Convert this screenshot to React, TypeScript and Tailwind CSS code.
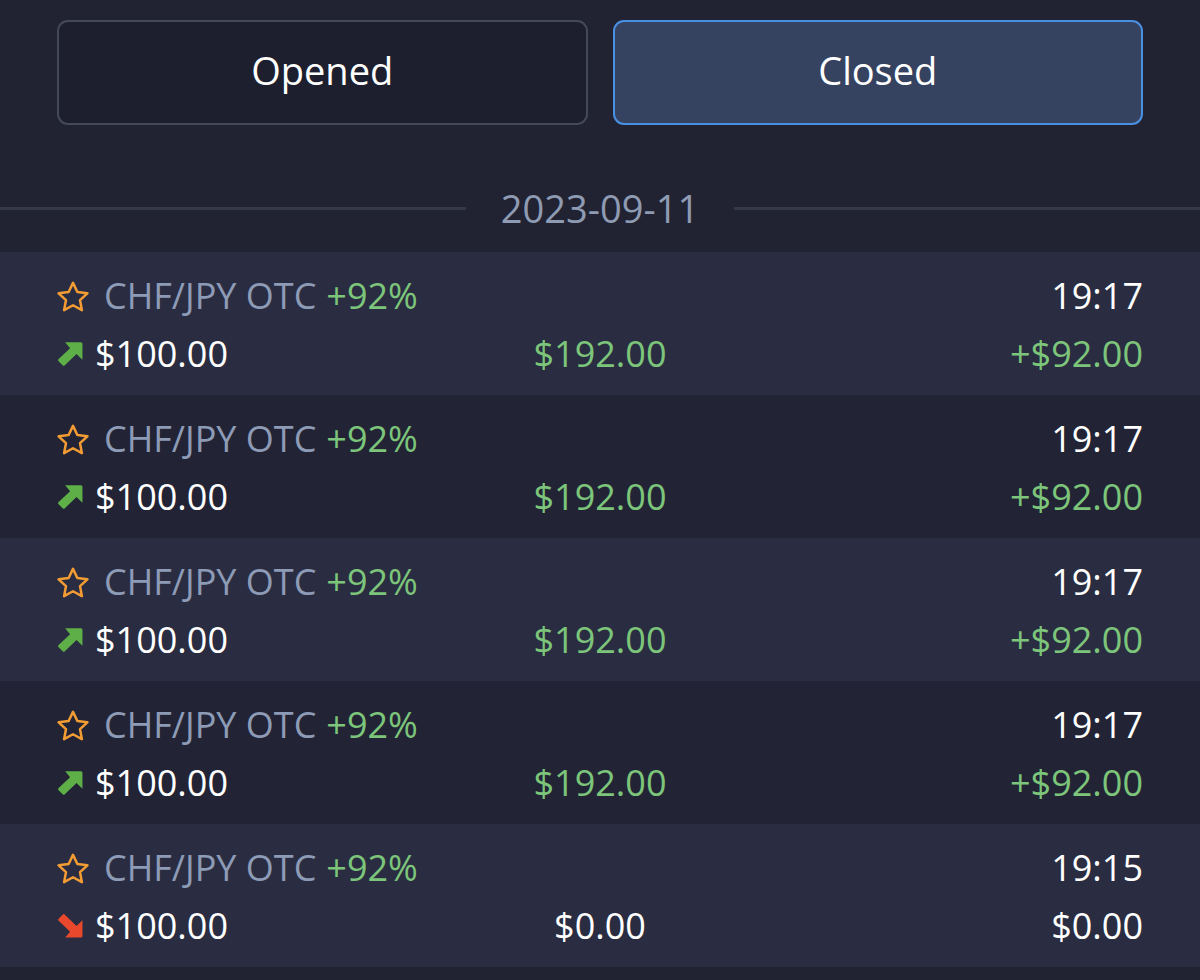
import type { ReactNode } from 'react';

type Trade = {
  pair: string;
  payout: string;
  time: string;
  amount: string;
  result: string;
  profit: string;
  up: boolean;
};

const trades: Trade[] = [
  { pair: 'CHF/JPY OTC', payout: '+92%', time: '19:17', amount: '$100.00', result: '$192.00', profit: '+$92.00', up: true },
  { pair: 'CHF/JPY OTC', payout: '+92%', time: '19:17', amount: '$100.00', result: '$192.00', profit: '+$92.00', up: true },
  { pair: 'CHF/JPY OTC', payout: '+92%', time: '19:17', amount: '$100.00', result: '$192.00', profit: '+$92.00', up: true },
  { pair: 'CHF/JPY OTC', payout: '+92%', time: '19:17', amount: '$100.00', result: '$192.00', profit: '+$92.00', up: true },
  { pair: 'CHF/JPY OTC', payout: '+92%', time: '19:15', amount: '$100.00', result: '$0.00', profit: '$0.00', up: false },
];

export default function App() {
  return (
    <div className="min-h-[980px] w-[1200px] overflow-hidden bg-[#212332] font-['Open_Sans',sans-serif] text-white">
      <div className="flex gap-[25px] px-[57px] pt-[20px]">
        <TabButton>Opened</TabButton>
        <TabButton active>Closed</TabButton>
      </div>

      <div className="mt-[58px] flex items-center gap-[35px]">
        <div className="h-[3px] flex-1 bg-[#343849]" />
        <div className="text-[38px] leading-[50px] text-[#8e9bb3]">2023-09-11</div>
        <div className="h-[3px] flex-1 bg-[#343849]" />
      </div>

      <div className="mt-[19px]">
        {trades.map((trade, i) => (
          <TradeRow key={i} trade={trade} light={i % 2 === 0} />
        ))}
      </div>
    </div>
  );
}

function TabButton({ children, active = false }: { children: ReactNode; active?: boolean }) {
  return (
    <button
      className={
        active
          ? 'flex h-[105px] flex-1 items-center justify-center rounded-[11px] border-2 border-[#4a90e2] bg-[#354260] pb-[4px] text-[38px] text-white'
          : 'flex h-[105px] flex-1 items-center justify-center rounded-[11px] border-2 border-[#444857] bg-[#1d1f2e] pb-[4px] text-[38px] text-white'
      }
    >
      {children}
    </button>
  );
}

function TradeRow({ trade, light }: { trade: Trade; light: boolean }) {
  const win = trade.result !== '$0.00';
  return (
    <div className={light ? 'h-[143px] bg-[#2a2d41] px-[57px] pt-[15px]' : 'h-[143px] bg-[#222435] px-[57px] pt-[15px]'}>
      <div className="flex h-[58px] items-center justify-between text-[36px]">
        <div className="flex items-center">
          <StarIcon />
          <span className="ml-[15px] text-[#8d9bb6]">{trade.pair}</span>
          <span className="ml-[10px] text-[#7cc57a]">{trade.payout}</span>
        </div>
        <span>{trade.time}</span>
      </div>
      <div className="grid h-[58px] grid-cols-3 items-center text-[36px]">
        <div className="flex items-center">
          {trade.up ? <UpArrow /> : <DownArrow />}
          <span className="ml-[12px]">{trade.amount}</span>
        </div>
        <div className={win ? 'text-center text-[#7cc57a]' : 'text-center text-white'}>{trade.result}</div>
        <div className={win ? 'text-right text-[#7cc57a]' : 'text-right text-white'}>{trade.profit}</div>
      </div>
    </div>
  );
}

function StarIcon() {
  return (
    <svg width="32" height="31" viewBox="1.2 1.1 21.6 20.6" fill="none" stroke="#f39c33" strokeWidth="1.7" strokeLinejoin="round">
      <path d="M12 2.2l2.95 6.2 6.75.85-4.95 4.65 1.25 6.7L12 17.3l-6 3.3 1.25-6.7L2.3 9.25l6.75-.85z" />
    </svg>
  );
}

function UpArrow() {
  return (
    <svg width="26" height="24" viewBox="1.5 1.3 24 22">
      <path
        d="M9 1.5h14.5a1.5 1.5 0 0 1 1.5 1.5v14.5l-5.5-5.3-10.8 10.5a1.4 1.4 0 0 1-2 0l-3.7-3.7a1.4 1.4 0 0 1 0-2L13.6 6.9z"
        fill="#5eaf48"
      />
    </svg>
  );
}

function DownArrow() {
  return (
    <svg width="26" height="24" viewBox="1.5 0.8 24 22">
      <path
        d="M9 22.5h14.5a1.5 1.5 0 0 0 1.5-1.5V6.5l-5.5 5.3L8.7 1.3a1.4 1.4 0 0 0-2 0L3 5a1.4 1.4 0 0 0 0 2l10.6 10.1z"
        fill="#e9482c"
      />
    </svg>
  );
}
